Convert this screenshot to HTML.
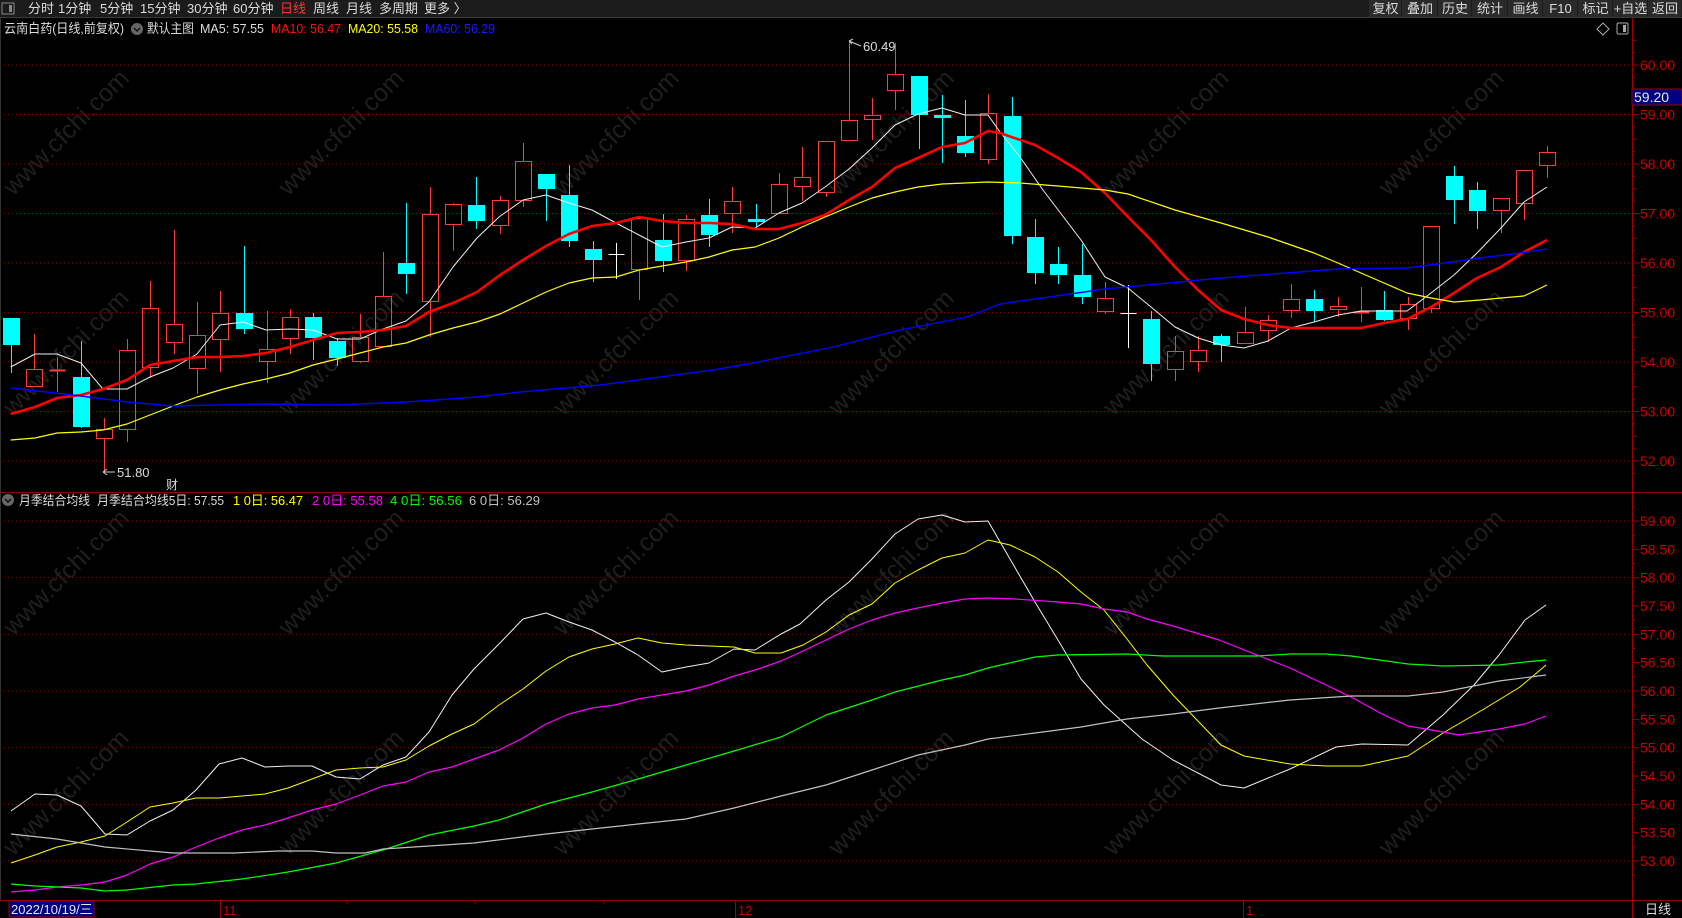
<!DOCTYPE html>
<html><head><meta charset="utf-8"><style>
html,body{margin:0;padding:0;background:#000;width:1682px;height:918px;overflow:hidden}
svg{display:block}
text{font-family:"Liberation Sans","Noto Sans CJK SC",sans-serif}
</style></head><body>
<svg id="s" width="1682" height="918" xmlns="http://www.w3.org/2000/svg">
<rect width="1682" height="918" fill="#000"/>
<g id="wm" fill="#1f1f1f" font-size="25"></g>
<g id="grid"></g>
<g id="cand"></g>
<g id="lines" fill="none"></g>
<!-- top bar -->
<rect x="0" y="0" width="1682" height="17" fill="#1b1b1b"/>
<line x1="0" y1="17.5" x2="1682" y2="17.5" stroke="#3a3a3a"/>
<rect x="2" y="3" width="12" height="11" fill="none" stroke="#888"/>
<rect x="9" y="5" width="3" height="7" fill="#888"/>
<g font-size="13" fill="#dcdcdc">
<text x="28" y="13">分时</text><text x="58" y="13">1分钟</text><text x="100" y="13">5分钟</text><text x="140" y="13">15分钟</text><text x="187" y="13">30分钟</text><text x="233" y="13">60分钟</text>
<text x="280" y="13" fill="#ff3333">日线</text><text x="313" y="13">周线</text><text x="346" y="13">月线</text><text x="379" y="13">多周期</text><text x="424" y="13">更多 〉</text>
</g>
<g id="btns" font-size="13" fill="#dcdcdc"></g>
<!-- title line -->
<g font-size="13">
<text x="4" y="33" fill="#dcdcdc" textLength="120" lengthAdjust="spacingAndGlyphs">云南白药(日线,前复权)</text>
<circle cx="137" cy="29" r="6" fill="#666"/><path d="M134 28l3 3 3-3" stroke="#111" stroke-width="1.5" fill="none"/>
<text x="147" y="33" fill="#dcdcdc" textLength="47" lengthAdjust="spacingAndGlyphs">默认主图</text>
<text x="200" y="33" fill="#dcdcdc" textLength="64" lengthAdjust="spacingAndGlyphs">MA5: 57.55</text>
<text x="271" y="33" fill="#ff1010" textLength="70" lengthAdjust="spacingAndGlyphs">MA10: 56.47</text>
<text x="348" y="33" fill="#ffff00" textLength="70" lengthAdjust="spacingAndGlyphs">MA20: 55.58</text>
<text x="425" y="33" fill="#1a1aff" textLength="70" lengthAdjust="spacingAndGlyphs">MA60: 56.29</text>
</g>
<path d="M1603 23l6 6-6 6-6-6z" fill="none" stroke="#aaa"/>
<rect x="1617" y="23" width="11" height="11" rx="1.5" fill="none" stroke="#aaa"/><rect x="1623" y="25" width="3" height="7" fill="#aaa"/>
<!-- frame -->
<line x1="1632.5" y1="18" x2="1632.5" y2="918" stroke="#9a0000"/>
<line x1="0" y1="492.5" x2="1682" y2="492.5" stroke="#9a0000"/>
<line x1="0" y1="900.5" x2="1682" y2="900.5" stroke="#9a0000"/>
<line x1="0.5" y1="18" x2="0.5" y2="900" stroke="#333"/>
<g id="axis" font-size="14" fill="#cc0000"></g>
<rect x="1632" y="89" width="50" height="16" fill="#000080" stroke="#9a0000"/>
<text x="1634" y="102" font-size="14" fill="#e8e8e8">59.20</text>
<!-- annotations -->
<text x="863" y="51" font-size="13" fill="#dcdcdc">60.49</text>
<path d="M849 41l12 5M849 41l4 -2M849 41l3 3" stroke="#ccc" fill="none"/>
<text x="117" y="477" font-size="13" fill="#dcdcdc">51.80</text>
<path d="M103 472h12M103 472l4 -3M103 472l4 3" stroke="#ccc" fill="none"/>
<text x="166" y="489" font-size="12" fill="#dcdcdc">财</text>
<!-- lower header -->
<g font-size="13">
<circle cx="8" cy="500" r="6" fill="#666"/><path d="M5 499l3 3 3-3" stroke="#111" stroke-width="1.5" fill="none"/>
<text x="19" y="505" fill="#dcdcdc" textLength="71" lengthAdjust="spacingAndGlyphs">月季结合均线</text>
<text x="97" y="505" fill="#dcdcdc" textLength="127" lengthAdjust="spacingAndGlyphs">月季结合均线5日: 57.55</text>
<text x="233" y="505" fill="#ffff00" textLength="70" lengthAdjust="spacingAndGlyphs">1 0日: 56.47</text>
<text x="312" y="505" fill="#ff00ff" textLength="71" lengthAdjust="spacingAndGlyphs">2 0日: 55.58</text>
<text x="390" y="505" fill="#00ff00" textLength="72" lengthAdjust="spacingAndGlyphs">4 0日: 56.56</text>
<text x="469" y="505" fill="#c0c0c0" textLength="71" lengthAdjust="spacingAndGlyphs">6 0日: 56.29</text>
</g>
<!-- bottom axis -->
<rect x="9" y="901" width="85" height="16" fill="#000080" stroke="#9a0000"/>
<text x="11" y="914" font-size="13" fill="#e8e8e8">2022/10/19/三</text>
<line x1="220.5" y1="901" x2="220.5" y2="918" stroke="#9a0000"/>
<text x="223" y="915" font-size="13" fill="#cc0000">11</text>
<line x1="735.5" y1="901" x2="735.5" y2="918" stroke="#9a0000"/>
<text x="738" y="915" font-size="13" fill="#cc0000">12</text>
<line x1="1243.5" y1="901" x2="1243.5" y2="918" stroke="#9a0000"/>
<text x="1246" y="915" font-size="13" fill="#cc0000">1</text>
<g stroke="#9a0000"><line x1="347" y1="901" x2="347" y2="904"/><line x1="475" y1="901" x2="475" y2="904"/><line x1="604" y1="901" x2="604" y2="904"/></g>
<text x="1645" y="914" font-size="13" fill="#dcdcdc">日线</text>
</svg>
<script>
const NS="http://www.w3.org/2000/svg";
function el(p,t,a,txt){const e=document.createElementNS(NS,t);for(const k in a)e.setAttribute(k,a[k]);if(txt!=null)e.textContent=txt;p.appendChild(e);return e;}
const G=id=>document.getElementById(id);
const wm=G('wm');
[[70,140],[345,140],[620,140],[895,140],[1170,140],[1445,140],[70,360],[345,360],[620,360],[895,360],[1170,360],[1445,360],[70,580],[345,580],[620,580],[895,580],[1170,580],[1445,580],[70,800],[345,800],[620,800],[895,800],[1170,800],[1445,800]].forEach(([x,y])=>{el(wm,'text',{x:x-80,y:y,transform:`rotate(-45 ${x} ${y})`},'www.cfchi.com');});
const grid=G('grid'),ax=G('axis');
for(let p=52;p<=60;p++){const y=65+(60-p)*49.5;el(grid,'line',{x1:0,y1:y,x2:1632,y2:y,stroke:'#8a0000','stroke-dasharray':'1 3'});el(ax,'text',{x:1640,y:y+5},p.toFixed(2));}
for(let p=51.75;p<=60.5;p+=0.25){const y=65+(60-p)*49.5;if(y<20||y>490)continue;const m=Math.abs(p-Math.round(p))<0.01;el(ax,'line',{x1:1632,y1:y,x2:m?1639:(Math.abs(p*2-Math.round(p*2))<0.01?1637:1635),y2:y,stroke:'#9a0000'});}
for(let p=53;p<=59;p++){const y=521+(59-p)*56.67;el(grid,'line',{x1:0,y1:y,x2:1632,y2:y,stroke:'#8a0000','stroke-dasharray':'1 3'});}
for(let p=52.75;p<=59.5;p+=0.25){const y=521+(59-p)*56.67;if(y<495||y>898)continue;const h=Math.abs(p*2-Math.round(p*2))<0.01;el(ax,'line',{x1:1632,y1:y,x2:h?1639:1635,y2:y,stroke:'#9a0000'});if(h)el(ax,'text',{x:1640,y:y+5},p.toFixed(2));}
const bt=G('btns');const bx=[1369,1402,1438,1472,1508,1543,1578,1613,1648,1682];const bl=['复权','叠加','历史','统计','画线','F10','标记','+自选','返回'];
for(let i=0;i<9;i++){el(bt,'rect',{x:bx[i],y:0,width:bx[i+1]-bx[i]-1,height:17,fill:'#2a2a2a'});el(bt,'text',{x:(bx[i]+bx[i+1])/2,y:13,'text-anchor':'middle'},bl[i]);}
const C=[[318,318,345,373,'c'],[334,369,387,387,'r'],[357,370,370,392,'d'],[341,377,427,428,'c'],[418,429,439,472,'r'],[339,350,430,442,'r'],[281,308,368,378,'r'],[230,324,343,354,'r'],[302,335,369,394,'r'],[291,313,340,372,'r'],[246,313,329,334,'c'],[311,349,362,383,'r'],[309,317,339,354,'r'],[313,317,338,360,'c'],[338,341,358,366,'c'],[314,337,362,363,'r'],[252,296,347,347,'r'],[203,263,274,294,'c'],[187,214,302,337,'r'],[203,204,225,251,'r'],[177,205,221,229,'c'],[196,200,226,234,'r'],[143,161,201,207,'r'],[174,174,189,221,'c'],[165,195,241,247,'c'],[241,249,260,282,'c'],[243,254,254,279,'w'],[218,218,270,300,'r'],[214,240,261,272,'c'],[215,219,261,271,'r'],[199,215,235,247,'c'],[187,201,214,233,'r'],[204,219,222,228,'c'],[173,184,214,214,'r'],[147,177,187,201,'r'],[141,141,193,197,'r'],[41,120,141,141,'r'],[98,115,120,140,'r'],[43,74,91,110,'r'],[76,76,115,149,'c'],[95,115,118,163,'c'],[100,136,153,157,'c'],[94,113,160,164,'r'],[97,116,236,244,'c'],[219,237,273,284,'c'],[247,264,275,284,'c'],[244,275,297,304,'c'],[282,298,312,314,'r'],[285,313,313,348,'w'],[311,319,364,381,'c'],[336,351,370,381,'r'],[336,350,362,372,'r'],[334,336,345,362,'c'],[307,332,344,344,'r'],[315,320,331,342,'r'],[284,299,311,318,'r'],[290,299,311,322,'c'],[297,306,310,317,'r'],[287,312,313,322,'d'],[291,310,320,321,'c'],[297,304,319,330,'r'],[226,226,309,313,'r'],[166,176,200,224,'c'],[182,190,211,229,'c'],[198,198,211,233,'r'],[170,170,204,220,'r'],[146,152,166,178,'r']];
const cg=G('cand');const RED='#ff3c3c',CY='#00ffff';
C.forEach((c,i)=>{const x=Math.round(10.7+i*23.28)+0.5;const [h,t,b,l,k]=c;
 if(k==='c'){el(cg,'line',{x1:x,y1:h,x2:x,y2:l,stroke:CY});el(cg,'rect',{x:x-8.5,y:t,width:17,height:Math.max(b-t,2),fill:CY});}
 else if(k==='r'){if(h<t)el(cg,'line',{x1:x,y1:h,x2:x,y2:t,stroke:RED});if(l>b)el(cg,'line',{x1:x,y1:b,x2:x,y2:l,stroke:RED});el(cg,'rect',{x:x-8,y:t+0.5,width:16,height:Math.max(b-t-1,1),fill:'none',stroke:RED});}
 else {const col=k==='w'?'#fff':RED;el(cg,'line',{x1:x,y1:h,x2:x,y2:l,stroke:col});el(cg,'line',{x1:x-8,y1:t+0.5,x2:x+8,y2:t+0.5,stroke:col,'stroke-width':k==='d'?2:1});}
});
const L=G('lines');
function pl(pts,col,w){el(L,'polyline',{points:pts,stroke:col,'stroke-width':w,'stroke-linejoin':'round'});}
pl("10.7,367 35,354 57,354 81,363 103,389 127,389 150,377 173,368 197,354 220,325 243,322 266,330 290,329 313,330 337,339 360,339 383,329 406,321 429,302 453,267 477,238 499,217 523,200 546,195 569,203 592,210 616,223 639,235 662,247 686,242 709,238 732,227 755,228 779,213 802,203 825,187 849,169 872,148 895,125 918,114 942,108 965,115 988,115 1000,132 1020,157 1043,190 1081,240 1105,277 1128,288 1151,307 1175,327 1198,338 1221,345 1244,348 1268,341 1291,328 1314,322 1338,315 1361,311 1384,311 1407,311 1431,293 1454,275 1477,253 1501,228 1524,202 1547,187",'#f0f0f0',1);
pl("10.7,414 35,407 57,398 81,395 103,389 127,380 150,365 173,361 197,357 220,357 243,356 266,353 290,347 313,340 337,333 360,332 383,330 406,326 429,312 453,303 477,292 500,275 523,260 546,246 569,234 592,226 616,223 639,217 662,221 686,223 709,223 732,224 755,229 779,229 802,223 825,215 849,200 872,187 895,168 918,158 942,147 965,143 988,131 1000,133 1035,145 1058,158 1081,172 1105,193 1128,217 1151,240 1175,267 1198,290 1221,310 1244,319 1268,325 1291,328 1314,328 1338,328 1361,328 1384,323 1407,319 1431,307 1454,293 1477,278 1501,267 1524,252 1547,240",'#ff0000',2.6);
pl("10.7,440 35,438 57,433 81,432 103,430 127,424 150,415 173,406 197,397 220,390 243,384 266,379 290,373 313,365 337,359 360,353 383,347 406,343 429,335 453,328 477,322 500,314 523,303 546,292 569,283 592,278 616,277 639,270 662,266 686,262 709,257 732,250 755,247 779,238 802,227 825,217 849,207 872,198 895,192 918,187 942,184 965,183 988,182 1020,183 1058,186 1105,190 1128,194 1175,210 1221,223 1268,237 1314,253 1338,263 1361,273 1384,283 1407,293 1431,298 1454,302 1480,300 1501,298 1524,296 1547,285",'#ffff00',1.2);
pl("10.7,388 81,396 127,402 173,406 266,404 337,405 406,402 477,397 520,392 600,385 713,370 753,363 833,347 900,330 967,317 1000,304 1105,289 1221,278 1338,269 1407,268 1453,262 1480,258 1520,253 1547,249",'#0000ff',1.4);
pl("11,811 35,794 57,795 81,806 105,834 127,835 150,821 173,810 196,790 219,764 242,758 265,767 288,766 312,766 336,777 360,779 383,765 406,757 429,732 452,695 474,669 499,644 523,619 546,613 569,622 592,630 615,642 638,655 662,672 686,667 709,663 734,649 755,650 781,634 800,624 826,600 849,582 872,559 895,534 918,519 942,515 965,522 988,521 1010,559 1035,602 1061,645 1081,679 1104,705 1142,739 1173,760 1221,785 1244,788 1290,769 1336,747 1362,744 1408,745 1443,715 1474,685 1499,655 1525,620 1546,605",'#f0f0f0',1);
pl("11,863 35,855 57,847 81,842 105,836 127,822 150,807 173,803 196,798 219,798 242,796 265,794 288,788 312,779 336,770 360,768 383,767 406,760 429,746 452,734 474,724 499,705 523,689 546,671 569,657 592,649 615,644 638,638 662,643 686,645 709,646 734,647 755,653 781,653 803,645 826,632 849,615 872,604 895,583 918,570 942,558 965,553 988,540 1010,545 1035,557 1058,572 1081,592 1104,610 1127,639 1147,665 1173,695 1196,719 1221,745 1244,756 1290,764 1326,766 1362,766 1408,756 1443,733 1484,709 1520,687 1546,665",'#ffff00',1);
pl("11,892 35,890 57,887 81,885 105,882 127,875 150,864 173,857 196,847 219,838 242,830 265,825 288,818 312,810 336,804 360,795 383,786 406,782 429,772 452,767 474,759 499,750 523,738 546,724 569,714 592,708 615,705 638,699 662,695 686,691 709,685 734,676 755,670 781,661 803,651 826,640 849,629 872,620 895,613 918,608 942,603 965,599 988,598 1015,599 1058,602 1081,604 1104,609 1127,612 1147,619 1173,626 1219,640 1257,655 1290,668 1326,685 1351,697 1382,714 1408,726 1443,732 1459,735 1499,729 1525,724 1546,716",'#ff00ff',1.2);
pl("11,884 35,886 81,888 105,891 127,890 173,885 196,884 242,879 288,872 336,863 383,850 429,835 474,826 499,820 546,804 592,792 638,779 686,765 734,751 781,737 826,715 872,700 895,692 942,680 965,675 988,668 1035,657 1058,655 1127,654 1163,656 1257,656 1290,654 1326,654 1351,656 1408,664 1443,666 1499,665 1525,662 1546,660",'#00ff00',1.2);
pl("11,834 57,839 105,847 150,851 173,853 234,853 278,851 312,851 336,853 365,853 383,849 429,846 474,843 546,834 592,829 638,824 686,819 734,808 781,796 826,785 872,770 918,755 965,745 988,739 1035,733 1081,727 1127,719 1173,714 1219,708 1290,700 1351,696 1408,696 1443,692 1499,681 1546,675",'#c0c0c0',1.2);
</script>
</body></html>
